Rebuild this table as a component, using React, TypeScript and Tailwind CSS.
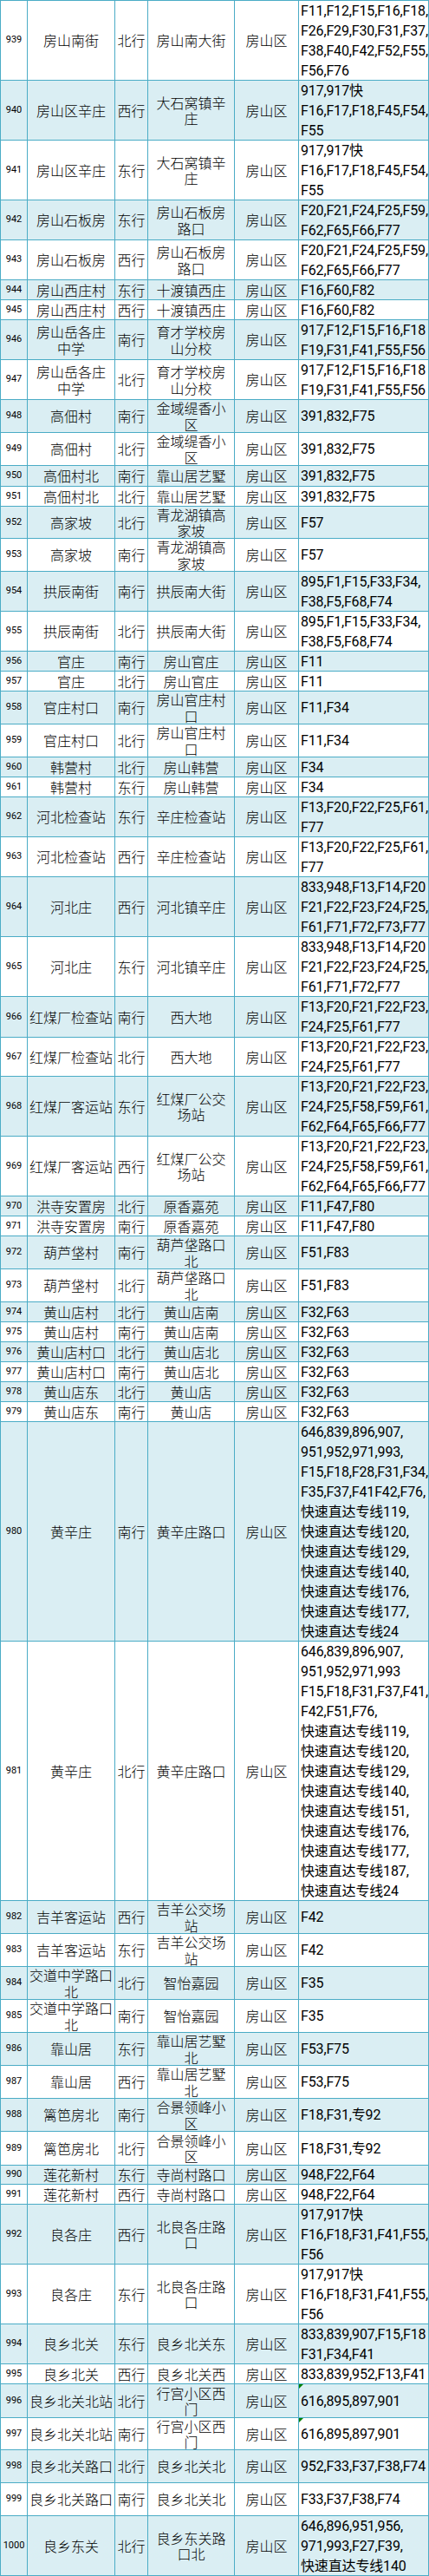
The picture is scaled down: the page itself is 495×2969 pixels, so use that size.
import React from "react";

type Row = [number, string, string, string, string, number];

const L980 =
  "646,839,896,907,\n951,952,971,993,\nF15,F18,F28,F31,F34,\nF35,F37,F41F42,F76,\n快速直达专线119,\n快速直达专线120,\n快速直达专线129,\n快速直达专线140,\n快速直达专线176,\n快速直达专线177,\n快速直达专线24";
const L981 =
  "646,839,896,907,\n951,952,971,993\nF15,F18,F31,F37,F41,\nF42,F51,F76,\n快速直达专线119,\n快速直达专线120,\n快速直达专线129,\n快速直达专线140,\n快速直达专线151,\n快速直达专线176,\n快速直达专线177,\n快速直达专线187,\n快速直达专线24";

const rows: Row[] = [
  [939, "房山南街", "北行", "房山南大街", "F11,F12,F15,F16,F18,\nF26,F29,F30,F31,F37,\nF38,F40,F42,F52,F55,\nF56,F76", 92],
  [940, "房山区辛庄", "西行", "大石窝镇辛\n庄", "917,917快\nF16,F17,F18,F45,F54,\nF55", 69],
  [941, "房山区辛庄", "东行", "大石窝镇辛\n庄", "917,917快\nF16,F17,F18,F45,F54,\nF55", 69],
  [942, "房山石板房", "东行", "房山石板房\n路口", "F20,F21,F24,F25,F59,\nF62,F65,F66,F77", 46],
  [943, "房山石板房", "西行", "房山石板房\n路口", "F20,F21,F24,F25,F59,\nF62,F65,F66,F77", 46],
  [944, "房山西庄村", "东行", "十渡镇西庄", "F16,F60,F82", 23],
  [945, "房山西庄村", "西行", "十渡镇西庄", "F16,F60,F82", 23],
  [946, "房山岳各庄\n中学", "南行", "育才学校房\n山分校", "917,F12,F15,F16,F18\nF19,F31,F41,F55,F56", 46],
  [947, "房山岳各庄\n中学", "北行", "育才学校房\n山分校", "917,F12,F15,F16,F18\nF19,F31,F41,F55,F56", 46],
  [948, "高佃村", "南行", "金域缇香小\n区", "391,832,F75", 38],
  [949, "高佃村", "北行", "金域缇香小\n区", "391,832,F75", 38],
  [950, "高佃村北", "南行", "靠山居艺墅", "391,832,F75", 24],
  [951, "高佃村北", "北行", "靠山居艺墅", "391,832,F75", 23],
  [952, "高家坡", "北行", "青龙湖镇高\n家坡", "F57", 37],
  [953, "高家坡", "南行", "青龙湖镇高\n家坡", "F57", 38],
  [954, "拱辰南街", "南行", "拱辰南大街", "895,F1,F15,F33,F34,\nF38,F5,F68,F74", 46],
  [955, "拱辰南街", "北行", "拱辰南大街", "895,F1,F15,F33,F34,\nF38,F5,F68,F74", 46],
  [956, "官庄", "南行", "房山官庄", "F11", 23],
  [957, "官庄", "北行", "房山官庄", "F11", 23],
  [958, "官庄村口", "南行", "房山官庄村\n口", "F11,F34", 38],
  [959, "官庄村口", "北行", "房山官庄村\n口", "F11,F34", 38],
  [960, "韩营村", "北行", "房山韩营", "F34", 23],
  [961, "韩营村", "东行", "房山韩营", "F34", 23],
  [962, "河北检查站", "东行", "辛庄检查站", "F13,F20,F22,F25,F61,\nF77", 46],
  [963, "河北检查站", "西行", "辛庄检查站", "F13,F20,F22,F25,F61,\nF77", 46],
  [964, "河北庄", "西行", "河北镇辛庄", "833,948,F13,F14,F20\nF21,F22,F23,F24,F25,\nF61,F71,F72,F73,F77", 69],
  [965, "河北庄", "东行", "河北镇辛庄", "833,948,F13,F14,F20\nF21,F22,F23,F24,F25,\nF61,F71,F72,F77", 69],
  [966, "红煤厂检查站", "南行", "西大地", "F13,F20,F21,F22,F23,\nF24,F25,F61,F77", 47],
  [967, "红煤厂检查站", "北行", "西大地", "F13,F20,F21,F22,F23,\nF24,F25,F61,F77", 45],
  [968, "红煤厂客运站", "东行", "红煤厂公交\n场站", "F13,F20,F21,F22,F23,\nF24,F25,F58,F59,F61,\nF62,F64,F65,F66,F77", 69],
  [969, "红煤厂客运站", "西行", "红煤厂公交\n场站", "F13,F20,F21,F22,F23,\nF24,F25,F58,F59,F61,\nF62,F64,F65,F66,F77", 69],
  [970, "洪寺安置房", "北行", "原香嘉苑", "F11,F47,F80", 23],
  [971, "洪寺安置房", "南行", "原香嘉苑", "F11,F47,F80", 23],
  [972, "葫芦垡村", "南行", "葫芦垡路口\n北", "F51,F83", 38],
  [973, "葫芦垡村", "北行", "葫芦垡路口\n北", "F51,F83", 38],
  [974, "黄山店村", "北行", "黄山店南", "F32,F63", 23],
  [975, "黄山店村", "南行", "黄山店南", "F32,F63", 23],
  [976, "黄山店村口", "北行", "黄山店北", "F32,F63", 23],
  [977, "黄山店村口", "南行", "黄山店北", "F32,F63", 23],
  [978, "黄山店东", "北行", "黄山店", "F32,F63", 23],
  [979, "黄山店东", "南行", "黄山店", "F32,F63", 23],
  [980, "黄辛庄", "南行", "黄辛庄路口", L980, 253],
  [981, "黄辛庄", "北行", "黄辛庄路口", L981, 299],
  [982, "吉羊客运站", "西行", "吉羊公交场\n站", "F42", 38],
  [983, "吉羊客运站", "东行", "吉羊公交场\n站", "F42", 38],
  [984, "交道中学路口\n北", "北行", "智怡嘉园", "F35", 38],
  [985, "交道中学路口\n北", "南行", "智怡嘉园", "F35", 38],
  [986, "靠山居", "东行", "靠山居艺墅\n北", "F53,F75", 38],
  [987, "靠山居", "西行", "靠山居艺墅\n北", "F53,F75", 38],
  [988, "篱笆房北", "南行", "合景领峰小\n区", "F18,F31,专92", 38],
  [989, "篱笆房北", "北行", "合景领峰小\n区", "F18,F31,专92", 39],
  [990, "莲花新村", "东行", "寺尚村路口", "948,F22,F64", 22],
  [991, "莲花新村", "西行", "寺尚村路口", "948,F22,F64", 23],
  [992, "良各庄", "西行", "北良各庄路\n口", "917,917快\nF16,F18,F31,F41,F55,\nF56", 69],
  [993, "良各庄", "东行", "北良各庄路\n口", "917,917快\nF16,F18,F31,F41,F55,\nF56", 69],
  [994, "良乡北关", "东行", "良乡北关东", "833,839,907,F15,F18\nF31,F34,F41", 46],
  [995, "良乡北关", "西行", "良乡北关西", "833,839,952,F13,F41", 23],
  [996, "良乡北关北站", "北行", "行宫小区西\n门", "616,895,897,901", 39],
  [997, "良乡北关北站", "南行", "行宫小区西\n门", "616,895,897,901", 37],
  [998, "良乡北关路口", "北行", "良乡北关北", "952,F33,F37,F38,F74", 38],
  [999, "良乡北关路口", "南行", "良乡北关北", "F33,F37,F38,F74", 38],
  [1000, "良乡东关", "北行", "良乡东关路\n口北", "646,896,951,956,\n971,993,F27,F39,\n快速直达专线140", 69],
];

const cjk =
  "flex items-center justify-center border-l border-b border-[#4bacc6] text-center whitespace-pre leading-[18.5px] text-[16px] font-light text-black font-['Noto_Sans_CJK_SC',sans-serif]";

export default function App() {
  return (
    <div className="w-[495px] bg-white border-t border-[#4bacc6]">
      {rows.map(([no, station, dir, road, lines, h]) => {
        const blue = no % 2 === 0;
        const tri = no === 996 || no === 997;
        return (
          <div
            key={no}
            className={`flex ${blue ? "bg-[#daeef3]" : "bg-white"}`}
            style={{ height: h }}
          >
            <div className="flex w-[31px] shrink-0 items-center justify-center border-l border-b border-[#4bacc6] text-[11px] text-black font-['Roboto','Liberation_Sans',sans-serif]">
              {no}
            </div>
            <div className={`w-[101px] shrink-0 ${cjk}`}>{station}</div>
            <div className={`w-[38px] shrink-0 ${cjk}`}>{dir}</div>
            <div className={`w-[100px] shrink-0 ${cjk}`}>{road}</div>
            <div className={`w-[74px] shrink-0 ${cjk}`}>房山区</div>
            <div className="relative flex w-[151px] shrink-0 items-center border-l border-r border-b border-[#4bacc6] pl-[2px]">
              {tri && (
                <div className="absolute left-0 top-0 h-0 w-0 border-t-[5px] border-r-[5px] border-t-[#008000] border-r-transparent" />
              )}
              <div className="whitespace-pre text-[16px] leading-[23px] tracking-[-0.15px] text-black font-['Roboto','Noto_Sans_CJK_SC',sans-serif]">
                {lines}
              </div>
            </div>
          </div>
        );
      })}
    </div>
  );
}
